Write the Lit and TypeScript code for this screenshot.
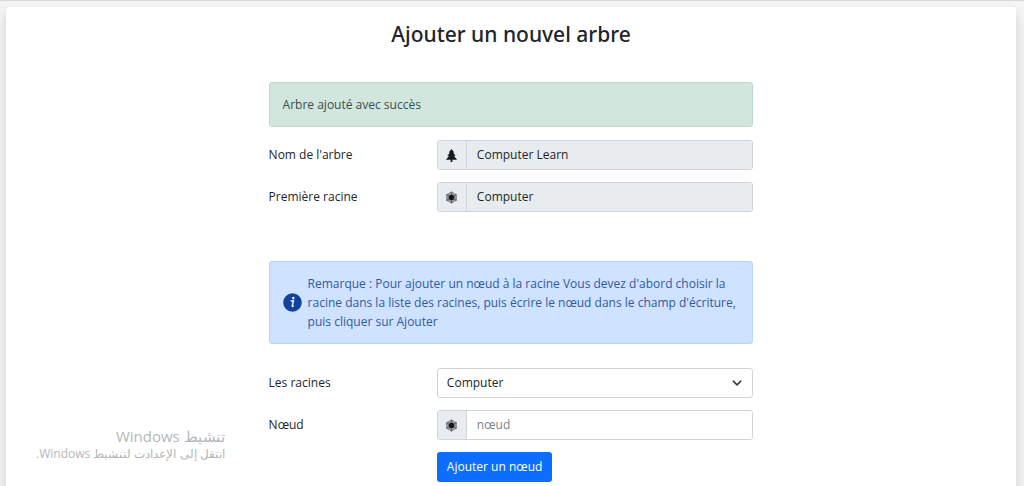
import { LitElement, html, css, svg } from "lit";
import { customElement, property, state } from "lit/decorators.js";

const treeIcon = html`<svg class="icon" viewBox="0 0 12 13" aria-hidden="true">
  <path d="M6 0 L8.8 3.6 H7.5 L10.2 6.8 H8.4 L11.6 10.8 H6.9 V13 H5.1 V10.8 H0.4 L3.6 6.8 H1.8 L4.5 3.6 H3.2 Z" fill="#151a20" />
</svg>`;

const spokes = [0, 60, 120, 180, 240, 300];
const nodeIcon = html`<svg class="icon" viewBox="0 0 14 14" aria-hidden="true">
  <path d="M7 1 L12.2 4 V10 L7 13 L1.8 10 V4 Z" fill="#96999d" stroke="#84878b" stroke-width="1" />
  ${spokes.map(
    (a) => svg`<path d="M7 7 V1.4" stroke="#5c6065" stroke-width="0.8" transform="rotate(${a} 7 7)" />
      <circle cx="7" cy="1.4" r="0.9" fill="#6c7075" transform="rotate(${a} 7 7)" />`
  )}
  <circle cx="7" cy="7" r="3" fill="#14171b" />
</svg>`;

@customElement("form-row")
class FormRow extends LitElement {
  static styles = css`
    :host {
      display: grid;
      grid-template-columns: 168fr 316fr;
      align-items: center;
    }
    .control {
      grid-column: 2;
      grid-row: 1;
    }
  `;
  render() {
    return html`<slot name="label"></slot><div class="control"><slot></slot></div>`;
  }
}

@customElement("app-root")
class AppRoot extends LitElement {
  @property() treeName = "Computer Learn";
  @property() rootName = "Computer";
  @state() roots = ["Computer"];

  static styles = css`
    :host {
      display: block;
      min-height: 100vh;
      box-sizing: border-box;
      padding: 6px 8px 0 6px;
      border-top: 1px solid #d8d8d8;
      background: #f4f4f4;
      color: #212529;
      font: 12px/18px "Open Sans", "Noto Sans", sans-serif;
      position: relative;
      overflow: hidden;
    }
    .card {
      min-height: 100vh;
      box-sizing: border-box;
      padding: 14px 0 24px;
      border-radius: 4px 4px 0 0;
      background: #fff;
      box-shadow: 0 6px 12px rgba(0, 0, 0, 0.15);
    }
    .title {
      margin: 0;
      text-align: center;
      font-family: "Noto Sans", "Open Sans", sans-serif;
      font-size: 21px;
      line-height: 26px;
      font-weight: 500;
    }
    .form {
      width: 48%;
      min-width: 300px;
      margin: 35px auto 0;
      display: flex;
      flex-direction: column;
      gap: 12px;
    }
    .alert {
      box-sizing: border-box;
      padding: 12px 13px;
      border: 1px solid;
      border-radius: 3px;
      line-height: 19px;
    }
    .success {
      margin-bottom: 1px;
      background: #d1e7dd;
      border-color: #badbcc;
      color: #3a4c52;
    }
    .info {
      display: flex;
      align-items: center;
      gap: 6px;
      margin: 37px 0 12px;
      background: #cfe2ff;
      border-color: #b6d4fe;
      color: #2f5a9e;
    }
    .info-icon {
      flex: none;
      width: 19px;
      height: 19px;
    }
    .icon {
      width: 13px;
      height: 13px;
    }
    .group {
      display: flex;
      height: 30px;
      box-sizing: border-box;
      border: 1px solid #ced4da;
      border-radius: 3px;
      overflow: hidden;
      background: #fff;
    }
    .addon {
      flex: none;
      width: 28px;
      display: grid;
      place-items: center;
      background: #e9ecef;
      border-right: 1px solid #ced4da;
    }
    .input {
      flex: 1;
      min-width: 0;
      border: 0;
      padding: 0 10px;
      background: #fff;
      color: inherit;
      font: inherit;
    }
    .input:read-only {
      background: #e9ecef;
    }
    .input::placeholder {
      color: #7b8289;
      opacity: 1;
    }
    .select-wrap {
      display: grid;
      align-items: center;
    }
    .select,
    .chevron {
      grid-area: 1 / 1;
    }
    .select {
      appearance: none;
      width: 100%;
      height: 30px;
      padding: 0 28px 0 9px;
      border: 1px solid #ced4da;
      border-radius: 3px;
      background: #fff;
      color: inherit;
      font: inherit;
    }
    .chevron {
      justify-self: end;
      margin-right: 11px;
      width: 10px;
      height: 10px;
      pointer-events: none;
    }
    .button {
      display: block;
      height: 30px;
      padding: 0 10px;
      border: 0;
      border-radius: 3px;
      background: #0d6efd;
      color: #fff;
      font: inherit;
    }
    .watermark {
      position: absolute;
      left: 36px;
      bottom: 24px;
      color: #b5b7b9;
      pointer-events: none;
    }
    .screen {
      position: absolute;
      inset: 0 0 auto 0;
      height: 100vh;
      pointer-events: none;
    }
    .watermark-title {
      margin: 0;
      font-size: 15px;
      line-height: 18px;
    }
    .watermark-text {
      margin: 0;
      font-size: 12px;
      line-height: 18px;
    }
  `;

  render() {
    return html`
      <main class="card">
        <h1 class="title">Ajouter un nouvel arbre</h1>
        <form class="form" @submit=${(e: Event) => e.preventDefault()}>
          <div class="alert success" role="status">Arbre ajouté avec succès</div>
          <form-row>
            <label slot="label" for="tree">Nom de l'arbre</label>
            <div class="group">
              <span class="addon">${treeIcon}</span>
              <input class="input" id="tree" readonly .value=${this.treeName} />
            </div>
          </form-row>
          <form-row>
            <label slot="label" for="root">Première racine</label>
            <div class="group">
              <span class="addon">${nodeIcon}</span>
              <input class="input" id="root" readonly .value=${this.rootName} />
            </div>
          </form-row>
          <div class="alert info" role="note">
            <svg class="info-icon" viewBox="0 0 19 19" aria-hidden="true">
              <circle cx="9.5" cy="9.5" r="9.3" fill="#12429a" />
              <circle cx="10.3" cy="5" r="1.3" fill="#dce9ff" />
              <path d="M7.6 8 L10.4 7.6 L9.2 13 Q9.2 13.7 10.8 13" fill="none" stroke="#dce9ff" stroke-width="1.6" />
            </svg>
            <span>Remarque : Pour ajouter un nœud à la racine Vous devez d'abord choisir la racine dans la liste des racines, puis écrire le nœud dans le champ d'écriture, puis cliquer sur Ajouter</span>
          </div>
          <form-row>
            <label slot="label" for="roots">Les racines</label>
            <div class="select-wrap">
              <select class="select" id="roots">
                ${this.roots.map((r) => html`<option>${r}</option>`)}
              </select>
              <svg class="chevron" viewBox="0 0 16 16" aria-hidden="true">
                <path d="M2 5 L8 11 L14 5" fill="none" stroke="#343a40" stroke-width="2.4" stroke-linecap="round" stroke-linejoin="round" />
              </svg>
            </div>
          </form-row>
          <form-row>
            <label slot="label" for="node">Nœud</label>
            <div class="group">
              <span class="addon">${nodeIcon}</span>
              <input class="input" id="node" placeholder="nœud" />
            </div>
          </form-row>
          <form-row>
            <button class="button" type="submit">Ajouter un nœud</button>
          </form-row>
        </form>
      </main>
      <div class="screen">
        <aside class="watermark" dir="rtl" lang="ar">
          <p class="watermark-title">تنشيط Windows</p>
          <p class="watermark-text">انتقل إلى الإعدادت لتنشيط Windows.</p>
        </aside>
      </div>
    `;
  }
}
